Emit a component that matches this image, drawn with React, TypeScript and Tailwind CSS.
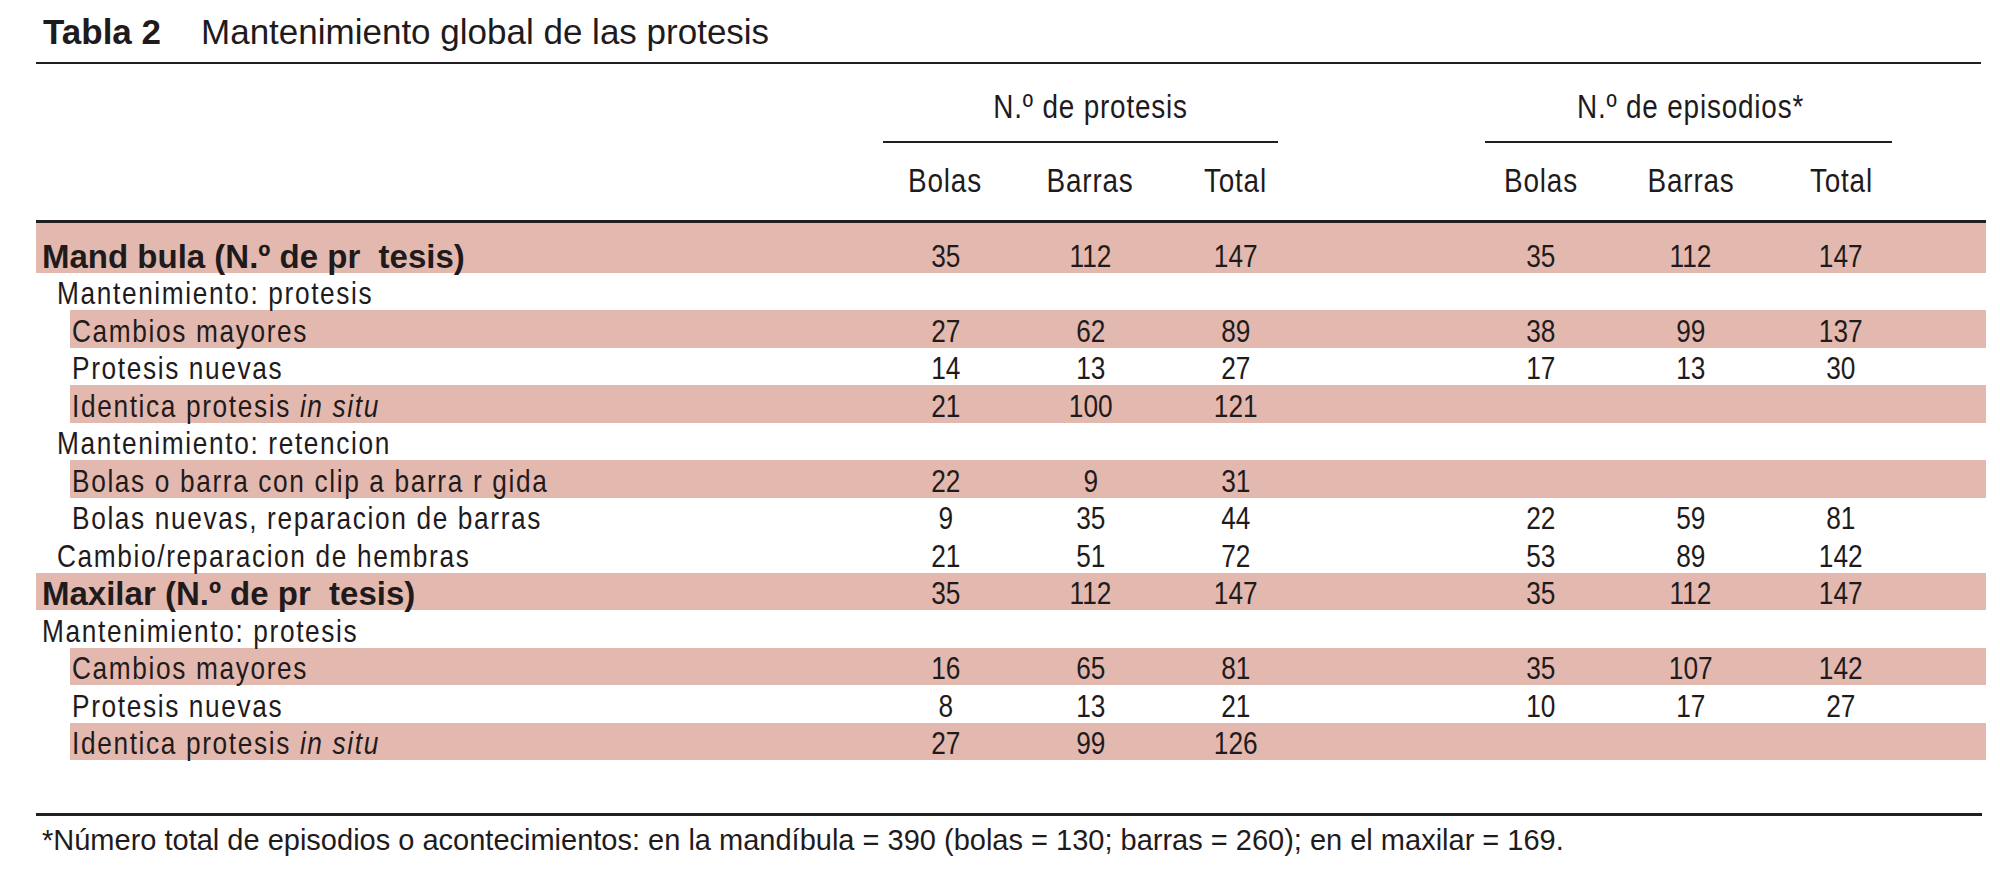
import type { ReactNode } from 'react'

// ─── Data ─────────────────────────────────────────────────────────────────────

type Kind = 'bold' | 'l0' | 'l1' | 'l2'

interface Row {
  label: ReactNode
  kind: Kind
  shade?: boolean
  first?: boolean
  p: string[]
  e: string[]
}

const insitu = (
  <>
    Identica protesis <i>in situ</i>
  </>
)

const ROWS: Row[] = [
  { label: 'Mand bula (N.º de pr  tesis)', kind: 'bold', shade: true, first: true, p: ['35', '112', '147'], e: ['35', '112', '147'] },
  { label: 'Mantenimiento: protesis', kind: 'l1', p: [], e: [] },
  { label: 'Cambios mayores', kind: 'l2', shade: true, p: ['27', '62', '89'], e: ['38', '99', '137'] },
  { label: 'Protesis nuevas', kind: 'l2', p: ['14', '13', '27'], e: ['17', '13', '30'] },
  { label: insitu, kind: 'l2', shade: true, p: ['21', '100', '121'], e: [] },
  { label: 'Mantenimiento: retencion', kind: 'l1', p: [], e: [] },
  { label: 'Bolas o barra con clip a barra r gida', kind: 'l2', shade: true, p: ['22', '9', '31'], e: [] },
  { label: 'Bolas nuevas, reparacion de barras', kind: 'l2', p: ['9', '35', '44'], e: ['22', '59', '81'] },
  { label: 'Cambio/reparacion de hembras', kind: 'l1', p: ['21', '51', '72'], e: ['53', '89', '142'] },
  { label: 'Maxilar (N.º de pr  tesis)', kind: 'bold', shade: true, p: ['35', '112', '147'], e: ['35', '112', '147'] },
  { label: 'Mantenimiento: protesis', kind: 'l0', p: [], e: [] },
  { label: 'Cambios mayores', kind: 'l2', shade: true, p: ['16', '65', '81'], e: ['35', '107', '142'] },
  { label: 'Protesis nuevas', kind: 'l2', p: ['8', '13', '21'], e: ['10', '17', '27'] },
  { label: insitu, kind: 'l2', shade: true, p: ['27', '99', '126'], e: [] },
]

// no narrow face installed: squeeze Liberation Sans horizontally instead
const FONT = "font-['Liberation_Sans',Arial,sans-serif]"
const SQUEEZE = 'inline-block scale-x-[0.82]'

// ─── Pieces ───────────────────────────────────────────────────────────────────

function Numbers({ p, e }: { p: string[]; e: string[] }) {
  return (
    <div className={`flex w-[1113px] shrink-0 text-[32px] leading-[33px] ${FONT}`}>
      {[0, 1, 2].map(i => (
        <div key={`p${i}`} className="w-[145px] text-center">
          <span className={SQUEEZE}>{p[i] ?? ''}</span>
        </div>
      ))}
      <div className="w-[158px]" />
      {[0, 1, 2].map(i => (
        <div key={`e${i}`} className="w-[150px] text-center">
          <span className={SQUEEZE}>{e[i] ?? ''}</span>
        </div>
      ))}
      <div className="w-[70px]" />
    </div>
  )
}

function BodyRow({ row }: { row: Row }) {
  const outer = row.kind === 'l2' ? 'pl-[34px]' : ''
  const height = row.first ? 'h-[49.5px]' : 'h-[37.5px]'
  const pad = row.kind === 'l1' ? 'pl-[21px]' : row.kind === 'l2' ? 'pl-[2px]' : 'pl-[6px]'

  return (
    <div className={`flex ${outer}`}>
      <div className={`flex flex-1 items-end ${height} ${row.shade ? 'bg-[#e3b8ae]' : ''}`}>
        {row.kind === 'bold' ? (
          <div className={`min-w-0 flex-1 whitespace-pre ${pad} text-[33px] leading-[33px] font-bold ${FONT}`}>
            {row.label}
          </div>
        ) : (
          <div className={`min-w-0 flex-1 whitespace-pre ${pad} text-[32px] leading-[33px] tracking-[2px] ${FONT}`}>
            <span className={`${SQUEEZE} origin-left`}>{row.label}</span>
          </div>
        )}
        <Numbers p={row.p} e={row.e} />
      </div>
    </div>
  )
}

function Group({ title, width, under }: { title: string; width: string; under: string }) {
  return (
    <div className={`flex flex-col ${width} ${FONT}`}>
      <div className="text-center text-[34px] leading-[34px] tracking-[1px]">
        <span className={SQUEEZE}>{title}</span>
      </div>
      <div className={`mt-[18px] h-[2px] bg-[#231f20] ${under}`} />
    </div>
  )
}

function SubHeads({ cell }: { cell: string }) {
  return (
    <>
      {['Bolas', 'Barras', 'Total'].map(t => (
        <div key={t} className={`${cell} text-center text-[34px] leading-[34px] tracking-[1px] ${FONT}`}>
          <span className={SQUEEZE}>{t}</span>
        </div>
      ))}
    </>
  )
}

// ─── Page ─────────────────────────────────────────────────────────────────────

export default function App() {
  return (
    <div className="min-h-[879px] w-[2000px] bg-white text-[#1f1b1c]">
      <div className="ml-[36px] w-[1950px]">
        {/* Title */}
        <div className={`flex h-[62px] items-start pt-[14px] pl-[7px] text-[35px] leading-[35px] ${FONT}`}>
          <span className="font-bold">Tabla 2</span>
          <span className="ml-[40px]">Mantenimiento global de las protesis</span>
        </div>
        <div className="h-[2px] w-[1945px] bg-[#231f20]" />

        {/* Column headers */}
        <div className="flex pt-[25px]">
          <div className="w-[837px] shrink-0" />
          <Group title="N.º de protesis" width="w-[435px]" under="ml-[10px] mr-[30px]" />
          <div className="w-[158px] shrink-0" />
          <Group title="N.º de episodios*" width="w-[450px]" under="ml-[19px] mr-[24px]" />
        </div>
        <div className="flex pt-[20px] pb-[23px]">
          <div className="w-[837px] shrink-0" />
          <SubHeads cell="w-[145px]" />
          <div className="w-[158px] shrink-0" />
          <SubHeads cell="w-[150px]" />
        </div>
        <div className="h-[3px] w-[1950px] bg-[#231f20]" />

        {/* Body */}
        <div className="flex flex-col">
          {ROWS.map((row, i) => (
            <BodyRow key={i} row={row} />
          ))}
        </div>

        {/* Footnote */}
        <div className="mt-[53px] h-[3px] w-[1946px] bg-[#231f20]" />
        <div className={`pt-[10px] pl-[6px] text-[29px] leading-[29px] ${FONT}`}>
          *Número total de episodios o acontecimientos: en la mandíbula = 390 (bolas = 130; barras = 260); en el maxilar = 169.
        </div>
      </div>
    </div>
  )
}
